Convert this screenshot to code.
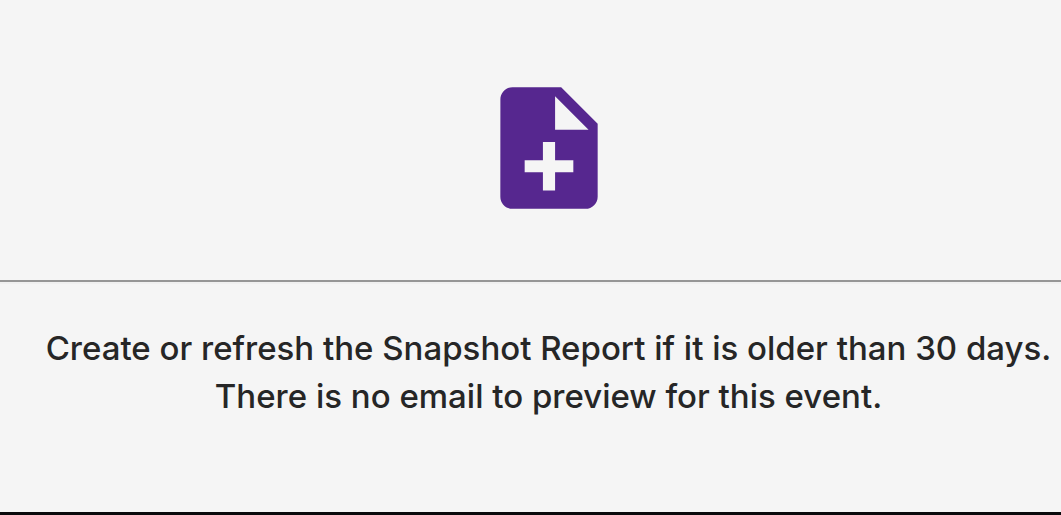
<main class="panel">
  <div class="figure">
    <svg class="icon" viewBox="0 0 24 24" aria-hidden="true">
      <path d="M14 2H6c-1.100 0-1.990.900-1.990 2L4 20c0 1.100.890 2 1.990 2H18c1.100 0 2-.900 2-2V8l-6-6zm2 14h-3v3h-2v-3H8v-2h3v-3h2v3h3v2zm-3-7V3.500L18.500 9H13z" />
    </svg>
  </div>
  <p class="message">
    Create or refresh the Snapshot Report if it is older than 30 days.
    <br />
    There is no email to preview for this event.
  </p>
</main>

<style>
  :global(body) {
    background: #f5f5f5;
  }

  .panel {
    display: flex;
    flex-direction: column;
    border-bottom: 3px solid #0a0a0c;
    background: #f5f5f5;
    color: #262626;
    font-family: Inter, "Open Sans", sans-serif;
  }

  .figure {
    display: flex;
    justify-content: center;
    padding: 75px 0 59px 36px;
    border-bottom: 2px solid #969696;
    box-shadow: 0 2px 0 #f0f0f0;
  }

  .icon {
    width: 146px;
    height: 146px;
    fill: #56278f;
  }

  .message {
    margin: 0;
    padding: 42px 0 92px 36px;
    font-size: 33px;
    font-weight: 500;
    line-height: 48px;
    text-align: center;
    white-space: nowrap;
  }
</style>
